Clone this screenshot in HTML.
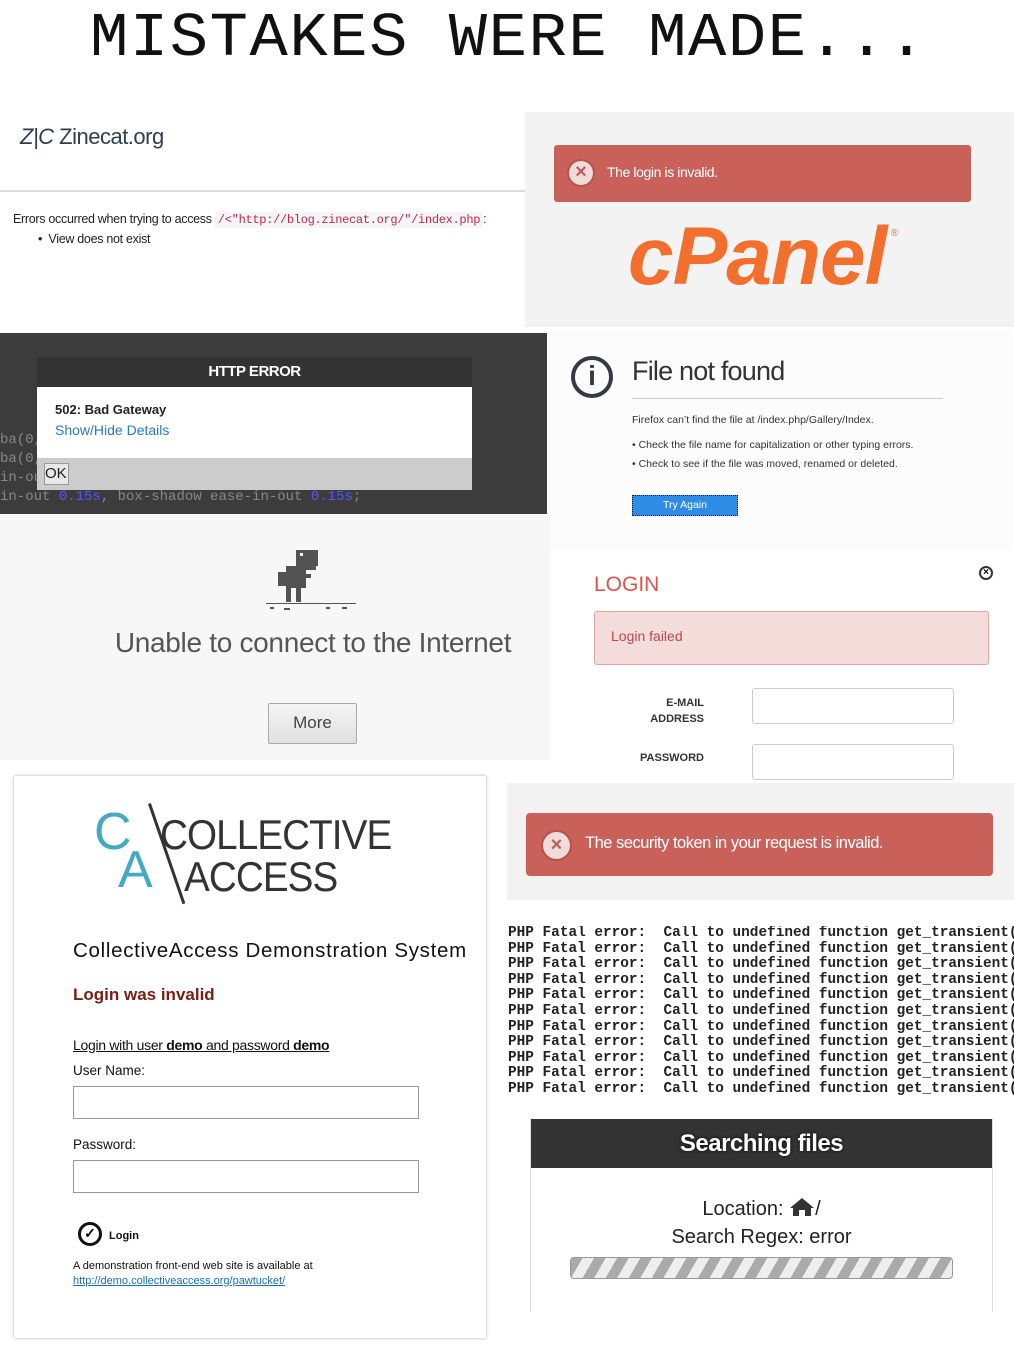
<!DOCTYPE html>
<html><head><meta charset="utf-8">
<style>
*{margin:0;padding:0;box-sizing:border-box}
body{width:1014px;height:1352px;position:relative;background:#fff;font-family:"Liberation Sans",sans-serif;overflow:hidden}
.a{position:absolute}
.title{left:90px;top:8px;font-family:"Liberation Mono",monospace;font-size:62px;letter-spacing:1.5px;color:#111;font-weight:normal;white-space:nowrap;line-height:62px;transform:scaleX(1.03);transform-origin:left}
.xi{display:inline-block;width:28px;height:28px;border-radius:50%;background:#eedcda;border:2px solid #b9504a;color:#c25a55;font-weight:bold;text-align:center;line-height:23px;font-size:20px}
.mono{font-family:"Liberation Mono",monospace}
.php{font-family:"Liberation Mono",monospace;font-weight:bold;font-size:14.4px;line-height:15.6px;color:#222;white-space:pre}
</style></head><body>
<div class="a title">MISTAKES WERE MADE...</div>

<!-- zinecat -->
<div class="a" style="left:0;top:112px;width:525px;height:218px;background:#fff">
  <div class="a" style="left:20px;top:12px;font-size:22px;color:#2c3e50;letter-spacing:-0.5px"><span style="font-style:italic;font-weight:300">Z|C</span> Zinecat.org</div>
  <div class="a" style="left:0;top:78px;width:525px;height:2px;background:#ddd"></div>
  <div class="a" style="left:13px;top:100px;font-size:12.5px;color:#222;letter-spacing:-0.3px">Errors occurred when trying to access <span class="mono" style="background:#f5f5f5;color:#c7254e;font-size:12px;padding:1px 3px">/&lt;"http://blog.zinecat.org/"/index.php</span>:</div>
  <div class="a" style="left:38px;top:120px;font-size:12.5px;color:#222;letter-spacing:-0.3px">•&nbsp; View does not exist</div>
</div>

<!-- cpanel -->
<div class="a" style="left:525px;top:112px;width:489px;height:215px;background:#f3f3f3">
  <div class="a" style="left:29px;top:33px;width:417px;height:57px;background:#c9615a;border-radius:3px">
    <span class="xi a" style="left:13px;top:14px">×</span>
    <div class="a" style="left:53px;top:19px;color:#fff;font-size:14px;letter-spacing:-0.4px">The login is invalid.</div>
  </div>
  <div class="a" style="left:103px;top:98px;font-size:82px;font-weight:bold;font-style:italic;color:#f26f2e;letter-spacing:-1px;font-family:'Liberation Sans',sans-serif">cPanel</div>
  <div class="a" style="left:366px;top:116px;font-size:10px;color:#f26f2e">®</div>
</div>

<!-- http error -->
<div class="a" style="left:0;top:333px;width:547px;height:181px;background:#3c3c3c">
  <div class="a mono" style="left:0;top:98px;font-size:14px;color:#888;line-height:19px">ba(0,<br>ba(0,<br>in-ou<br>in-out <span style="color:#55f">0.15s</span>, box-shadow ease-in-out <span style="color:#55f">0.15s</span>;</div>
  <div class="a" style="left:37px;top:24px;width:435px;height:133px;background:#ccc">
    <div style="height:30px;background:#333;color:#fff;font-weight:bold;font-size:15px;text-align:center;line-height:30px;letter-spacing:-0.5px">HTTP ERROR</div>
    <div style="height:71px;background:#fff;padding:15px 18px">
      <div style="font-size:13px;font-weight:bold;color:#222">502: Bad Gateway</div>
      <div style="font-size:14px;color:#2a7ac0;margin-top:5px">Show/Hide Details</div>
    </div>
    <div style="margin:5px 0 0 7px;width:25px;height:22px;border:1px solid #999;background:#e8e8e8;font-size:15px;line-height:20px;color:#222">OK</div>
  </div>
</div>

<!-- file not found -->
<div class="a" style="left:550px;top:330px;width:464px;height:220px;background:#fcfcfc">
  <div class="a" style="left:21px;top:26px;width:42px;height:42px;border:4px solid #333a44;border-radius:50%;text-align:center;font-size:28px;line-height:32px;color:#333a44;font-weight:bold">i</div>
  <div class="a" style="left:82px;top:26px;font-size:27px;color:#333;font-weight:300;letter-spacing:-0.8px">File not found</div>
  <div class="a" style="left:82px;top:68px;width:311px;height:1px;background:#ccc"></div>
  <div class="a" style="left:82px;top:84px;font-size:10.5px;color:#333">Firefox can’t find the file at /index.php/Gallery/Index.</div>
  <div class="a" style="left:82px;top:106px;font-size:10.5px;color:#333;line-height:19px">• Check the file name for capitalization or other typing errors.<br>• Check to see if the file was moved, renamed or deleted.</div>
  <div class="a" style="left:82px;top:165px;width:106px;height:21px;background:#2e8be6;border:1px dotted #113;color:#fff;font-size:10.5px;text-align:center;line-height:19px">Try Again</div>
</div>

<!-- dino -->
<div class="a" style="left:0;top:515px;width:550px;height:245px;background:#f7f7f7">
  <svg class="a" style="left:266px;top:35px" width="92" height="62" viewBox="0 0 92 62" fill="#535353">
    <rect x="30" y="0" width="22" height="16"/><rect x="34" y="3" width="3" height="3" fill="#f7f7f7"/><rect x="40" y="16" width="10" height="4"/>
    <rect x="20" y="16" width="20" height="22"/><rect x="12" y="22" width="10" height="14"/><rect x="16" y="22" width="4" height="12"/>
    <rect x="40" y="24" width="5" height="4"/><rect x="20" y="38" width="5" height="14"/><rect x="30" y="38" width="5" height="14"/>
    <rect x="0" y="53" width="90" height="1"/><rect x="4" y="57" width="4" height="2"/><rect x="18" y="58" width="6" height="2"/><rect x="60" y="57" width="4" height="2"/><rect x="76" y="57" width="5" height="2"/>
  </svg>
  <div class="a" style="left:0;width:626px;top:112px;text-align:center;font-size:28px;color:#555;letter-spacing:-0.3px">Unable to connect to the Internet</div>
  <div class="a" style="left:268px;top:188px;width:89px;height:41px;border:1px solid #aaa;border-radius:2px;background:linear-gradient(#f5f5f5,#e0e0e0);text-align:center;line-height:38px;font-size:17px;color:#444">More</div>
</div>

<!-- LOGIN -->
<div class="a" style="left:580px;top:555px;width:434px;height:225px;background:#fff">
  <div class="a" style="left:399px;top:11px;width:14px;height:14px;border:2px solid #333;border-radius:50%;font-size:10px;line-height:10px;text-align:center;font-weight:bold">×</div>
  <div class="a" style="left:14px;top:18px;font-size:21px;color:#e0524c">LOGIN</div>
  <div class="a" style="left:14px;top:56px;width:395px;height:54px;background:#f4dcdb;border:1px solid #e2a3a0;border-radius:3px;padding:16px 16px;font-size:14px;color:#b94a48">Login failed</div>
  <div class="a" style="left:40px;top:140px;width:84px;text-align:right;font-size:11px;font-weight:bold;color:#333;line-height:16px">E-MAIL<br>ADDRESS</div>
  <div class="a" style="left:40px;top:197px;width:84px;text-align:right;font-size:11px;font-weight:bold;color:#333">PASSWORD</div>
  <div class="a" style="left:172px;top:133px;width:202px;height:36px;border:1px solid #ccc;border-radius:3px"></div>
  <div class="a" style="left:172px;top:189px;width:202px;height:36px;border:1px solid #ccc;border-radius:3px"></div>
</div>

<!-- collective access -->
<div class="a" style="left:14px;top:776px;width:472px;height:562px;background:#fff;box-shadow:0 0 3px #aaa">
  <div class="a" style="left:80px;top:30px;font-size:52px;color:#45a9c3;line-height:52px">C</div>
  <div class="a" style="left:104px;top:68px;font-size:52px;color:#45a9c3;line-height:52px">A</div>
  <div class="a" style="left:134px;top:28px;width:3px;height:106px;background:#333;transform:rotate(-19deg);transform-origin:top left"></div>
  <div class="a" style="left:146px;top:36px;font-size:42px;color:#333;letter-spacing:-1px;line-height:46px;transform:scaleX(0.92);transform-origin:left">COLLECTIVE</div>
  <div class="a" style="left:170px;top:78px;font-size:42px;color:#333;letter-spacing:-1px;line-height:46px;transform:scaleX(0.92);transform-origin:left">ACCESS</div>
  <div class="a" style="left:59px;top:163px;font-size:20.5px;color:#111;letter-spacing:0.7px">CollectiveAccess Demonstration System</div>
  <div class="a" style="left:59px;top:209px;font-size:17px;color:#7a1d12;font-weight:bold">Login was invalid</div>
  <div class="a" style="left:59px;top:261px;font-size:14px;color:#111;text-decoration:underline;letter-spacing:-0.3px">Login with user <b>demo</b> and password <b>demo</b></div>
  <div class="a" style="left:59px;top:287px;font-size:13.5px;color:#111">User Name:</div>
  <div class="a" style="left:59px;top:310px;width:346px;height:33px;border:1px solid #999"></div>
  <div class="a" style="left:59px;top:361px;font-size:13.5px;color:#111">Password:</div>
  <div class="a" style="left:59px;top:384px;width:346px;height:33px;border:1px solid #999"></div>
  <div class="a" style="left:64px;top:446px;width:24px;height:24px;border:3px solid #111;border-radius:50%;font-size:14px;line-height:17px;text-align:center;font-weight:bold">✓</div>
  <div class="a" style="left:95px;top:454px;font-size:11px;font-weight:bold;color:#111">Login</div>
  <div class="a" style="left:59px;top:483px;font-size:11px;color:#111;line-height:15px">A demonstration front-end web site is available at<br><span style="color:#1a6fb8;text-decoration:underline">http://demo.collectiveaccess.org/pawtucket/</span></div>
</div>

<!-- security token -->
<div class="a" style="left:507px;top:783px;width:507px;height:117px;background:#f2f2f2">
  <div class="a" style="left:19px;top:30px;width:467px;height:63px;background:#c9615a;border-radius:4px">
    <span class="xi a" style="left:15px;top:17px;width:31px;height:31px;line-height:26px">×</span>
    <div class="a" style="left:59px;top:21px;color:#fff;font-size:16.5px;letter-spacing:-0.5px">The security token in your request is invalid.</div>
  </div>
</div>

<div class="a php" style="left:508px;top:926px;width:506px;overflow:hidden">PHP Fatal error:  Call to undefined function get_transient(
PHP Fatal error:  Call to undefined function get_transient(
PHP Fatal error:  Call to undefined function get_transient(
PHP Fatal error:  Call to undefined function get_transient(
PHP Fatal error:  Call to undefined function get_transient(
PHP Fatal error:  Call to undefined function get_transient(
PHP Fatal error:  Call to undefined function get_transient(
PHP Fatal error:  Call to undefined function get_transient(
PHP Fatal error:  Call to undefined function get_transient(
PHP Fatal error:  Call to undefined function get_transient(
PHP Fatal error:  Call to undefined function get_transient(</div>

<!-- searching files -->
<div class="a" style="left:530px;top:1119px;width:463px;height:193px;background:#fff;border-left:1px solid #ddd;border-right:1px solid #ddd">
  <div style="height:49px;background:#333;color:#fff;font-weight:bold;font-size:24px;text-align:center;line-height:49px;text-shadow:0 0 3px #000;letter-spacing:-0.5px">Searching files</div>
  <div class="a" style="left:0;width:461px;top:76px;text-align:center;font-size:20px;color:#222;line-height:28px">Location: <svg width="26" height="20" viewBox="0 0 26 20" style="vertical-align:-2px"><path d="M13 1 L1 11 H4 V19 H10 V13 H16 V19 H22 V11 H25 Z" fill="#333"/></svg>/<br>Search Regex: error</div>
  <div class="a" style="left:39px;top:138px;width:383px;height:22px;border:1px solid #999;border-radius:4px;background:repeating-linear-gradient(120deg,#aaa 0 10px,#eee 10px 20px)"></div>
</div>
</body></html>
